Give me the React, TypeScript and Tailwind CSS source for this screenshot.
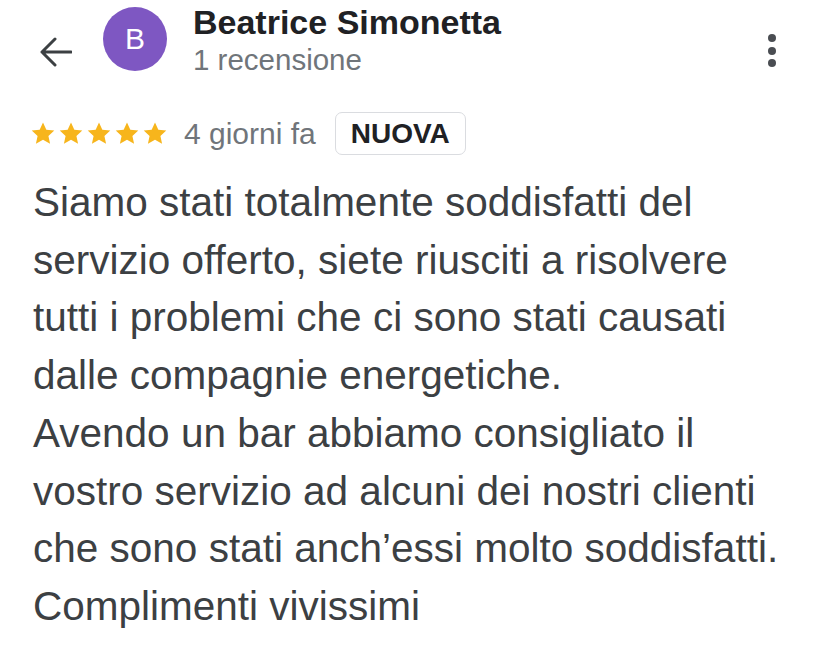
const reviewLines = [
  'Siamo stati totalmente soddisfatti del',
  'servizio offerto, siete riusciti a risolvere',
  'tutti i problemi che ci sono stati causati',
  'dalle compagnie energetiche.',
  'Avendo un bar abbiamo consigliato il',
  'vostro servizio ad alcuni dei nostri clienti',
  'che sono stati anch\u2019essi molto soddisfatti.',
  'Complimenti vivissimi',
];

function Star() {
  return (
    <svg width="26" height="25" viewBox="0 0 24 24" className="shrink-0">
      <path
        d="M12 1.5l3.2 6.9 7.6.8-5.6 5.1 1.6 7.5L12 17.9l-6.8 3.9 1.6-7.5-5.6-5.1 7.6-.8z"
        fill="#f7b51c"
      />
    </svg>
  );
}

export default function App() {
  return (
    <div className="w-[828px] h-[648px] bg-white overflow-hidden font-['Liberation_Sans',Arial,sans-serif]">
      <div className="flex items-start pt-[2px] pl-[40px] pr-[52px]">
        <button type="button" className="mt-[35px] w-[32px] h-[30px] shrink-0" aria-label="Indietro">
          <svg width="32" height="30" viewBox="0 0 32 30" fill="none" stroke="#3c4043" strokeWidth="3" strokeLinecap="round" strokeLinejoin="round">
            <path d="M31 15H2M15 2L2 15l13 13" />
          </svg>
        </button>
        <div className="ml-[31px] mt-[5px] w-[64px] h-[64px] rounded-full bg-[#7e57c2] flex items-center justify-center text-white text-[30px] leading-none shrink-0">
          B
        </div>
        <div className="ml-[26px] flex-1">
          <div className="text-[34px] leading-[40px] font-bold text-[#202124]">Beatrice Simonetta</div>
          <div className="text-[29.5px] leading-[36px] text-[#70757a]">1 recensione</div>
        </div>
        <div className="mt-[32px] flex flex-col items-center gap-[4.5px]">
          <span className="w-[8px] h-[8px] rounded-full bg-[#4a4d52]" />
          <span className="w-[8px] h-[8px] rounded-full bg-[#4a4d52]" />
          <span className="w-[8px] h-[8px] rounded-full bg-[#4a4d52]" />
        </div>
      </div>

      <div className="mt-[34px] pl-[30px] flex items-center h-[43px]">
        <div className="flex items-center gap-[2px]">
          <Star />
          <Star />
          <Star />
          <Star />
          <Star />
        </div>
        <span className="ml-[16px] text-[30px] leading-none text-[#70757a]">4 giorni fa</span>
        <span className="ml-[19px] h-[43px] px-[15px] flex items-center border border-[#dadce0] rounded-[7px] text-[28px] font-bold text-[#202124]">
          NUOVA
        </span>
      </div>

      <div className="mt-[19px] pl-[33px] text-[40.5px] leading-[57.7px] text-[#3c4043]">
        {reviewLines.map((line) => (
          <div key={line} className="whitespace-nowrap">
            {line}
          </div>
        ))}
      </div>
    </div>
  );
}
